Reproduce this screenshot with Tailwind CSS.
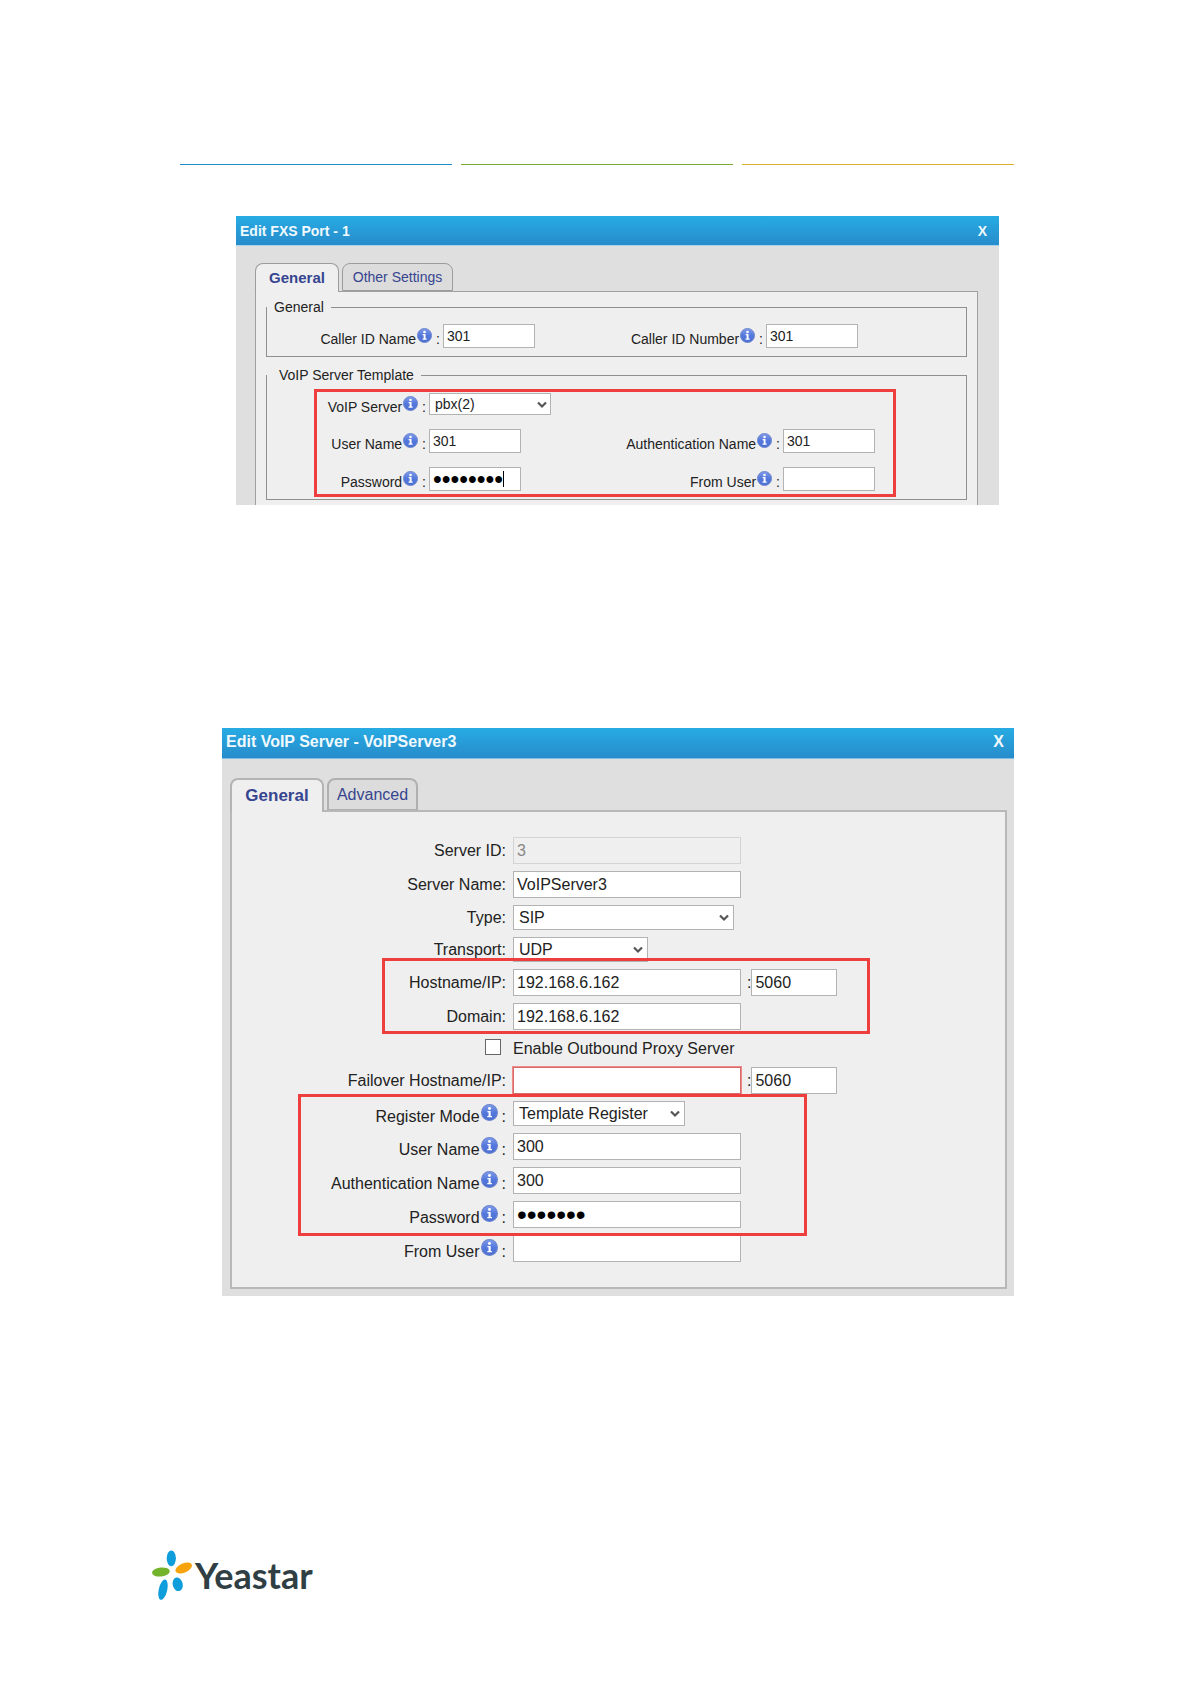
<!DOCTYPE html>
<html lang="en">
<head>
    <meta charset="UTF-8">
    <meta name="viewport" content="width=device-width, initial-scale=1.0">
    <title>Yeastar – FXS Port and VoIP Server</title>
    <script src="https://cdn.jsdelivr.net/npm/@tailwindcss/browser@4"></script>
</head>
<body class="bg-white text-[#222] font-['Liberation_Sans',Arial,sans-serif]">

    <!-- Shared icons -->
    <svg class="absolute size-0">
        <defs>
            <linearGradient id="info-fill" x1="0" y1="0" x2="0" y2="1">
                <stop offset="0" stop-color="#7f9cea"/>
                <stop offset="0.5" stop-color="#5578dc"/>
                <stop offset="1" stop-color="#4a6ed2"/>
            </linearGradient>
        </defs>
        <symbol id="info" viewBox="0 0 16 16">
            <circle cx="8" cy="8" r="7.5" fill="url(#info-fill)" stroke="#6f86cc" stroke-width="1"/>
            <circle cx="8" cy="4.2" r="1.4" fill="#fff"/>
            <path d="M6 6.5h3.1v4.8h1.2v1.2H5.9v-1.2h1.2V7.7H6z" fill="#fff"/>
        </symbol>
        <symbol id="chevron" viewBox="0 0 10 8">
            <path d="M1 1.5l4 4 4-4" fill="none" stroke="#555" stroke-width="2.2"/>
        </symbol>
    </svg>

    <div class="pl-[180px] pr-[177px] pt-[164px] pb-[84px]">

        <!-- Header rules -->
        <div class="grid grid-cols-3 gap-[9px]">
            <div class="h-px bg-[#1f8bc4]"></div>
            <div class="h-px bg-[#78aa35]"></div>
            <div class="h-px bg-[#dcae2e]"></div>
        </div>

        <!-- Edit FXS Port -->
        <section class="mt-[51px] ml-14 mr-[15px] bg-[#dfdfdf] text-sm">
            <header class="h-[30px] pl-1 pr-3 flex items-center justify-between bg-linear-to-b from-[#27abe3] to-[#278ccb] border-b border-[#a9d3ec] text-[#f0f9fd] font-bold">
                <h2>Edit FXS Port - 1</h2>
                <button type="button">X</button>
            </header>

            <div class="pt-[17px] pl-[19px] pr-[21px]">
                <div class="flex items-start gap-[3px] text-[#36458f]">
                    <button type="button" class="relative h-[29px] -mb-px w-[84px] rounded-t-lg border border-b-0 border-[#9c9c9c] bg-[#efefef] text-[15px] font-bold">General</button>
                    <button type="button" class="h-7 w-[111px] rounded-t-lg border border-[#9c9c9c] bg-[#dcdcdc]">Other Settings</button>
                </div>

                <div class="border border-b-0 border-[#a0a0a0] bg-[#efefef] pt-[5px] pl-2.5 pr-2.5 pb-[5px]">
                    <fieldset class="border border-[#8f8f8f] pb-2">
                        <legend class="px-[7px] leading-5">General</legend>
                        <div class="pt-[7px] grid grid-cols-[173fr_92px_225fr_92px_105fr] gap-x-[3px] items-center">
                            <label for="caller-name" class="flex items-center justify-end pt-1.5 leading-none">Caller ID Name<svg class="size-[15px] ml-px -mt-2"><use href="#info"/></svg><span class="ml-1">:</span></label>
                            <input type="text" id="caller-name" value="301" class="h-6 w-full bg-white border border-[#b3b3b3] px-[3px]">
                            <label for="caller-number" class="flex items-center justify-end pt-1.5 leading-none">Caller ID Number<svg class="size-[15px] ml-px -mt-2"><use href="#info"/></svg><span class="ml-1">:</span></label>
                            <input type="text" id="caller-number" value="301" class="h-6 w-full bg-white border border-[#b3b3b3] px-[3px]">
                        </div>
                    </fieldset>

                    <fieldset class="mt-2 border border-[#8f8f8f] pb-2">
                        <legend class="pl-3 pr-[7px] leading-5">VoIP Server Template</legend>
                        <div class="pt-2">
                            <div class="relative grid grid-cols-[159fr_92px_256fr_92px_88fr] grid-rows-[22px_24px_24px] gap-x-[3px] gap-y-3.5 items-center">
                                <label for="fxs-server" class="flex items-center justify-end pt-1.5 leading-none">VoIP Server<svg class="size-[15px] ml-px -mt-2"><use href="#info"/></svg><span class="ml-1">:</span></label>
                                <div class="relative col-span-4 w-[122px]">
                                    <select id="fxs-server" class="block appearance-none h-[22px] w-full bg-white border border-[#b3b3b3] px-[5px]">
                                        <option>pbx(2)</option>
                                    </select>
                                    <svg class="absolute right-1 top-2 w-2.5 h-2 pointer-events-none"><use href="#chevron"/></svg>
                                </div>

                                <label for="fxs-user" class="flex items-center justify-end pt-1.5 leading-none">User Name<svg class="size-[15px] ml-px -mt-2"><use href="#info"/></svg><span class="ml-1">:</span></label>
                                <input type="text" id="fxs-user" value="301" class="h-6 w-full bg-white border border-[#b3b3b3] px-[3px]">
                                <label for="fxs-auth" class="flex items-center justify-end pt-1.5 leading-none">Authentication Name<svg class="size-[15px] ml-px -mt-2"><use href="#info"/></svg><span class="ml-1">:</span></label>
                                <input type="text" id="fxs-auth" value="301" class="h-6 w-full bg-white border border-[#b3b3b3] px-[3px]">

                                <label for="fxs-password" class="col-start-1 flex items-center justify-end pt-1.5 leading-none">Password<svg class="size-[15px] ml-px -mt-2"><use href="#info"/></svg><span class="ml-1">:</span></label>
                                <div class="relative">
                                    <input type="password" id="fxs-password" value="password" class="block h-6 w-full bg-white border border-[#b3b3b3] px-[3px] text-black text-[25px] leading-none">
                                    <span class="absolute left-[74px] top-1 h-4 w-px bg-black"></span>
                                </div>
                                <label for="fxs-from" class="flex items-center justify-end pt-1.5 leading-none">From User<svg class="size-[15px] ml-px -mt-2"><use href="#info"/></svg><span class="ml-1">:</span></label>
                                <input type="text" id="fxs-from" class="h-6 w-full bg-white border border-[#b3b3b3] px-[3px]">

                                <!-- Highlight -->
                                <div class="absolute -top-1 -bottom-1.5 left-[47px] right-[70px] border-3 border-[#ee3e3e] pointer-events-none"></div>
                            </div>
                        </div>
                    </fieldset>
                </div>
            </div>
        </section>

        <!-- Edit VoIP Server -->
        <section class="mt-[223px] ml-[42px] bg-[#dfdfdf] text-base leading-5 pb-[7px]">
            <header class="h-[31px] pl-1 pr-2.5 pb-0.5 flex items-center justify-between bg-linear-to-b from-[#27abe3] to-[#278ccb] border-b border-[#7fbde2] text-[#f0f9fd] font-bold">
                <h2>Edit VoIP Server - VoIPServer3</h2>
                <button type="button">X</button>
            </header>

            <div class="pt-[19px] pl-2 pr-[7px]">
                <div class="flex items-start gap-[3px] text-[#36458f]">
                    <button type="button" class="relative h-[34px] -mb-0.5 w-[94px] rounded-t-lg border-2 border-b-0 border-[#b4b4b4] bg-[#efefef] text-[17px] font-bold">General</button>
                    <button type="button" class="h-8 w-[91px] rounded-t-lg border-2 border-b border-[#b0b0b0] bg-[#dcdcdc]">Advanced</button>
                </div>

                <div class="border-2 border-[#b8b8b8] bg-[#efefef] pt-[25px] pb-[25px] flex flex-col gap-[7px]">
                    <div class="grid grid-cols-[274fr_492fr] gap-[7px] items-center">
                        <label for="server-id" class="text-right">Server ID:</label>
                        <input type="text" id="server-id" value="3" disabled class="h-[27px] w-[228px] bg-[#efefef] border border-[#d4d4d4] px-[3px] text-[#888]">
                    </div>
                    <div class="grid grid-cols-[274fr_492fr] gap-[7px] items-center">
                        <label for="server-name" class="text-right">Server Name:</label>
                        <input type="text" id="server-name" value="VoIPServer3" class="h-[27px] w-[228px] bg-white border border-[#b3b3b3] px-[3px]">
                    </div>
                    <div class="grid grid-cols-[274fr_492fr] gap-[7px] items-center">
                        <label for="type" class="text-right">Type:</label>
                        <div class="relative w-[221px]">
                            <select id="type" class="block appearance-none h-[25px] w-full bg-white border border-[#b3b3b3] px-[5px]">
                                <option>SIP</option>
                            </select>
                            <svg class="absolute right-[5px] top-[9px] w-2.5 h-2 pointer-events-none"><use href="#chevron"/></svg>
                        </div>
                    </div>
                    <div class="grid grid-cols-[274fr_492fr] gap-[7px] items-center">
                        <label for="transport" class="text-right">Transport:</label>
                        <div class="relative w-[135px]">
                            <select id="transport" class="block appearance-none h-[25px] w-full bg-white border border-[#b3b3b3] px-[5px]">
                                <option>UDP</option>
                            </select>
                            <svg class="absolute right-[5px] top-[9px] w-2.5 h-2 pointer-events-none"><use href="#chevron"/></svg>
                        </div>
                    </div>

                    <div class="relative flex flex-col gap-[7px]">
                        <div class="grid grid-cols-[274fr_492fr] gap-[7px] items-center">
                            <label for="host" class="text-right">Hostname/IP:</label>
                            <div class="flex items-center">
                                <input type="text" id="host" value="192.168.6.162" class="h-[27px] w-[228px] bg-white border border-[#b3b3b3] px-[3px]">
                                <label for="host-port" class="ml-1.5">:</label>
                                <input type="text" id="host-port" value="5060" class="h-[27px] w-[86px] bg-white border border-[#b3b3b3] px-[3px]">
                            </div>
                        </div>
                        <div class="grid grid-cols-[274fr_492fr] gap-[7px] items-center">
                            <label for="domain" class="text-right">Domain:</label>
                            <input type="text" id="domain" value="192.168.6.162" class="h-[27px] w-[228px] bg-white border border-[#b3b3b3] px-[3px]">
                        </div>
                        <!-- Highlight -->
                        <div class="absolute -top-[11px] -bottom-1 left-[150px] right-[135px] border-3 border-[#ee3e3e] pointer-events-none"></div>
                    </div>

                    <div class="h-[23px] grid grid-cols-[274fr_492fr] gap-[7px] items-center">
                        <input type="checkbox" id="outbound" class="appearance-none size-4 bg-white border border-[#666] justify-self-end mr-[5px] mb-1">
                        <label for="outbound">Enable Outbound Proxy Server</label>
                    </div>
                    <div class="grid grid-cols-[274fr_492fr] gap-[7px] items-center">
                        <label for="failover" class="text-right">Failover Hostname/IP:</label>
                        <div class="flex items-center">
                            <input type="text" id="failover" class="h-[27px] w-[228px] bg-white border border-[#d96a6a] px-[3px] ring-1 ring-[#f08a8a]">
                            <label for="failover-port" class="ml-1.5">:</label>
                            <input type="text" id="failover-port" value="5060" class="h-[27px] w-[86px] bg-white border border-[#b3b3b3] px-[3px]">
                        </div>
                    </div>

                    <div class="relative flex flex-col gap-[7px]">
                        <div class="grid grid-cols-[274fr_492fr] gap-[7px] items-center">
                            <label for="register-mode" class="flex items-center justify-end pt-1.5 leading-none">Register Mode<svg class="size-[17px] ml-px -mt-2"><use href="#info"/></svg><span class="ml-1">:</span></label>
                            <div class="relative w-[172px]">
                                <select id="register-mode" class="block appearance-none h-[25px] w-full bg-white border border-[#b3b3b3] px-[5px]">
                                    <option>Template Register</option>
                                </select>
                                <svg class="absolute right-[5px] top-[9px] w-2.5 h-2 pointer-events-none"><use href="#chevron"/></svg>
                            </div>
                        </div>
                        <div class="grid grid-cols-[274fr_492fr] gap-[7px] items-center">
                            <label for="user-name" class="flex items-center justify-end pt-1.5 leading-none">User Name<svg class="size-[17px] ml-px -mt-2"><use href="#info"/></svg><span class="ml-1">:</span></label>
                            <input type="text" id="user-name" value="300" class="h-[27px] w-[228px] bg-white border border-[#b3b3b3] px-[3px]">
                        </div>
                        <div class="grid grid-cols-[274fr_492fr] gap-[7px] items-center">
                            <label for="auth-name" class="flex items-center justify-end pt-1.5 leading-none">Authentication Name<svg class="size-[17px] ml-px -mt-2"><use href="#info"/></svg><span class="ml-1">:</span></label>
                            <input type="text" id="auth-name" value="300" class="h-[27px] w-[228px] bg-white border border-[#b3b3b3] px-[3px]">
                        </div>
                        <div class="grid grid-cols-[274fr_492fr] gap-[7px] items-center">
                            <label for="password" class="flex items-center justify-end pt-1.5 leading-none">Password<svg class="size-[17px] ml-px -mt-2"><use href="#info"/></svg><span class="ml-1">:</span></label>
                            <input type="password" id="password" value="pass300" class="h-[27px] w-[228px] bg-white border border-[#b3b3b3] px-[3px] text-black text-[28px] leading-none">
                        </div>
                        <!-- Highlight -->
                        <div class="absolute -top-[7px] -bottom-2 left-[66px] right-[198px] border-3 border-[#ee3e3e] pointer-events-none"></div>
                    </div>

                    <div class="grid grid-cols-[274fr_492fr] gap-[7px] items-center">
                        <label for="from-user" class="flex items-center justify-end pt-1.5 leading-none">From User<svg class="size-[17px] ml-px -mt-2"><use href="#info"/></svg><span class="ml-1">:</span></label>
                        <input type="text" id="from-user" class="h-[27px] w-[228px] bg-white border border-[#b3b3b3] px-[3px]">
                    </div>
                </div>
            </div>
        </section>
    </div>

    <!-- Logo -->
    <footer class="mt-[170px] pl-[152px] pb-20 flex items-center gap-[3px]">
        <svg class="w-10 h-[50px]" viewBox="0 0 40 50">
            <ellipse cx="19.3" cy="8.3" rx="4.6" ry="7.9" fill="#0f9ddb"/>
            <ellipse cx="31.7" cy="18" rx="8.8" ry="4.6" fill="#f7a30c" transform="rotate(-24 31.7 18)"/>
            <ellipse cx="8.9" cy="22" rx="8.9" ry="4.5" fill="#73b42c" transform="rotate(-7 8.9 22)"/>
            <ellipse cx="11" cy="39.7" rx="4.2" ry="10.4" fill="#0f9ddb" transform="rotate(13 11 39.7)"/>
            <ellipse cx="25.7" cy="34.3" rx="5" ry="6.9" fill="#0f9ddb" transform="rotate(-14 25.7 34.3)"/>
        </svg>
        <span class="text-4xl leading-[50px] font-bold text-[#303f44] font-[Lato,sans-serif]">Yeastar</span>
    </footer>

</body>
</html>
